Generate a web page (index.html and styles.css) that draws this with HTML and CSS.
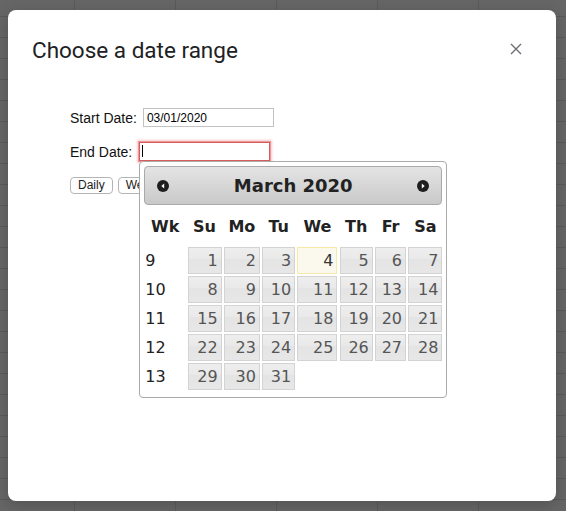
FILE: index.html
```html
<!DOCTYPE html>
<html lang="en">
<head>
<meta charset="utf-8">
<title>Choose a date range</title>
<link rel="stylesheet" href="styles.css">
</head>
<body>
<div class="dialog">
  <div class="dialog-head">
    <h1 class="dialog-title">Choose a date range</h1>
    <button class="close-btn" aria-label="Close">
      <svg width="12" height="12" viewBox="0 0 12 12"><path d="M1 1L11 11M11 1L1 11" stroke="#6b6e72" stroke-width="1.4" fill="none"/></svg>
    </button>
  </div>
  <div class="form">
    <div class="field-row">
      <label class="field-label">Start Date:</label>
      <input class="date-input" type="text" value="03/01/2020">
    </div>
    <div class="field-row">
      <label class="field-label">End Date:</label>
      <span class="input-wrap input-wrap-end">
        <input class="date-input date-input-active" type="text" value="">
        <span class="caret"></span>
        <div class="datepicker">
          <div class="dp-header">
            <svg class="dp-nav" width="12" height="12" viewBox="0 0 12 12"><circle cx="6" cy="6" r="6" fill="#1e1e1e"/><path d="M7.2 3.6L4.3 6L7.2 8.4Z" fill="#fff"/></svg>
            <span class="dp-title">March 2020</span>
            <svg class="dp-nav" width="12" height="12" viewBox="0 0 12 12"><circle cx="6" cy="6" r="6" fill="#1e1e1e"/><path d="M4.8 3.6L7.7 6L4.8 8.4Z" fill="#fff"/></svg>
          </div>
          <div class="dp-grid">
            <span class="dp-th">Wk</span><span class="dp-th">Su</span><span class="dp-th">Mo</span><span class="dp-th">Tu</span><span class="dp-th">We</span><span class="dp-th">Th</span><span class="dp-th">Fr</span><span class="dp-th">Sa</span>
            <span class="dp-wk">9</span><span class="dp-day">1</span><span class="dp-day">2</span><span class="dp-day">3</span><span class="dp-day dp-today">4</span><span class="dp-day">5</span><span class="dp-day">6</span><span class="dp-day">7</span>
            <span class="dp-wk">10</span><span class="dp-day">8</span><span class="dp-day">9</span><span class="dp-day">10</span><span class="dp-day">11</span><span class="dp-day">12</span><span class="dp-day">13</span><span class="dp-day">14</span>
            <span class="dp-wk">11</span><span class="dp-day">15</span><span class="dp-day">16</span><span class="dp-day">17</span><span class="dp-day">18</span><span class="dp-day">19</span><span class="dp-day">20</span><span class="dp-day">21</span>
            <span class="dp-wk">12</span><span class="dp-day">22</span><span class="dp-day">23</span><span class="dp-day">24</span><span class="dp-day">25</span><span class="dp-day">26</span><span class="dp-day">27</span><span class="dp-day">28</span>
            <span class="dp-wk">13</span><span class="dp-day">29</span><span class="dp-day">30</span><span class="dp-day">31</span>
          </div>
        </div>
      </span>
    </div>
    <div class="button-row">
      <button class="btn">Daily</button>
      <button class="btn">Weekly</button>
      <button class="btn">Monthly</button>
    </div>
  </div>
</div>
</body>
</html>
```
FILE: styles.css
```css
* { box-sizing: border-box; }
html, body { margin: 0; height: 100%; }
body {
  background-color: #666666;
  background-image:
    linear-gradient(to right, #5a5a5a 1px, transparent 1px),
    linear-gradient(to bottom, #5a5a5a 1px, transparent 1px);
  background-size: 101px 100%, 100% 21px;
  background-position: 74px 0, 0 16px;
  padding: 10px 10px 10px 8px;
  overflow: hidden;
}
.dialog {
  width: 548px;
  height: 491px;
  background: #fff;
  border-radius: 8px;
  padding: 26px 34px 0 24px;
  box-shadow: 0 4px 16px rgba(0,0,0,0.2);
}
.dialog-head {
  display: flex;
  justify-content: space-between;
  align-items: flex-start;
}
.dialog-title {
  margin: 0;
  font-family: Roboto, "Liberation Sans", sans-serif;
  font-weight: 400;
  font-size: 22.5px;
  line-height: 28px;
  color: #202124;
}
.close-btn {
  margin-top: 7px;
  width: 12px;
  height: 12px;
  padding: 0;
  border: 0;
  background: none;
  display: block;
}
.close-btn svg { display: block; }
.form {
  margin-top: 44px;
  padding-left: 38px;
  font-family: "Liberation Sans", Arial, sans-serif;
}
.field-row {
  display: flex;
  align-items: center;
  gap: 6px;
  height: 19px;
  margin-bottom: 15px;
  font-size: 14px;
  color: #111;
}
.field-label { white-space: nowrap; }
.input-wrap {
  position: relative;
  display: block;
  width: 131px;
  height: 19px;
}
.input-wrap-end { margin-left: 1px; }
.date-input {
  display: block;
  width: 131px;
  height: 19px;
  margin: 0;
  padding: 0 3px;
  border: 1px solid #c2c2c2;
  background: #fff;
  font-family: "Liberation Sans", Arial, sans-serif;
  font-size: 12px;
  color: #000;
  outline: none;
}
.date-input-active {
  border: 1px solid #d95c5c;
  box-shadow: 0 0 0 1px rgba(226, 110, 110, 0.55), 0 0 2px 2px rgba(236, 140, 140, 0.45);
}
.caret {
  position: absolute;
  left: 3px;
  top: 3px;
  width: 1px;
  height: 12px;
  background: #000;
}
.button-row {
  display: flex;
  gap: 5px;
  padding-top: 1px;
}
.btn {
  height: 17px;
  margin: 0;
  padding: 0 7px;
  font-family: "Liberation Sans", Arial, sans-serif;
  font-size: 12px;
  line-height: 15px;
  color: #222;
  background: #fff;
  border: 1px solid #b4b4b4;
  border-radius: 4px;
}
.datepicker {
  position: absolute;
  top: 100%;
  left: 0;
  z-index: 2;
  width: 308px;
  padding: 4px;
  border: 1px solid #aaaaaa;
  border-radius: 4px;
  background: #fff;
  font-family: "DejaVu Sans", Verdana, sans-serif;
  color: #222;
}
.dp-header {
  display: flex;
  align-items: center;
  justify-content: space-between;
  height: 39px;
  padding: 0 12px;
  border: 1px solid #aaaaaa;
  border-radius: 4px;
  background: linear-gradient(to bottom, #e4e4e4, #c9c9c9);
}
.dp-nav { display: block; flex: none; }
.dp-title {
  font-weight: bold;
  font-size: 18px;
  line-height: 37px;
  color: #222;
}
.dp-grid {
  display: grid;
  grid-template-columns: 40px 34px 36px 33px 40px 33px 31px 34px;
  grid-template-rows: 40px;
  grid-auto-rows: 27px;
  column-gap: 2.3px;
  row-gap: 2px;
  margin: 0 0 3px 1px;
}
.dp-th {
  font-weight: bold;
  font-size: 16px;
  text-align: center;
  padding-top: 4px;
  line-height: 36px;
  color: #222;
}
.dp-wk {
  font-size: 16px;
  line-height: 27px;
  color: #222;
}
.dp-day {
  border: 1px solid #d3d3d3;
  background: linear-gradient(to bottom, #eeeeee 0%, #e9e9e9 45%, #e4e4e4 46%, #e7e7e7 100%);
  color: #555555;
  font-size: 16px;
  line-height: 25px;
  text-align: right;
  padding-right: 3px;
}
.dp-today {
  border-color: #f8e9a6;
  background: #fbf9ee;
  color: #363636;
}
```
